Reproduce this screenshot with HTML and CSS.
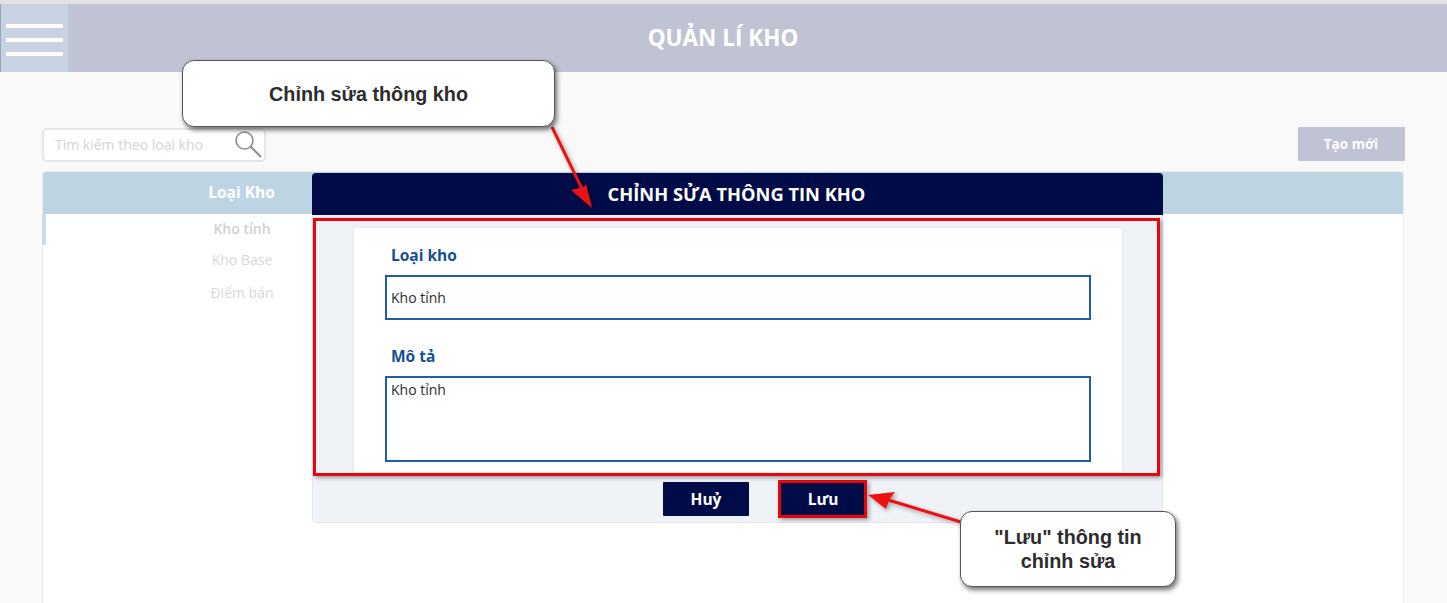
FILE: index.html
```html
<!DOCTYPE html>
<html lang="vi">
<head>
<meta charset="utf-8">
<title>Quản lí kho</title>
<link rel="stylesheet" href="styles.css">
</head>
<body>
<div class="page">
  <div class="strip"></div>
  <header class="topbar">
    <button class="menu" aria-label="Menu"><span></span><span></span><span></span></button>
    <h1 class="title">QUẢN LÍ KHO</h1>
  </header>
  <main class="content">
    <div class="toolbar">
      <div class="search">
        <span class="search-text">Tìm kiếm theo loại kho</span>
        <svg class="search-icon" width="30" height="30" viewBox="0 0 30 30" aria-hidden="true">
          <circle cx="11.5" cy="10.5" r="8.5" fill="none" stroke="#8f8f8f" stroke-width="1.6"/>
          <path d="M17.5 16.5L28 27" stroke="#8f8f8f" stroke-width="2.2" fill="none"/>
        </svg>
      </div>
      <button class="create">Tạo mới</button>
    </div>
    <section class="table">
      <div class="table-head"><div class="col">Loại Kho</div></div>
      <div class="row row-active"><div class="col">Kho tỉnh</div></div>
      <div class="row"><div class="col">Kho Base</div></div>
      <div class="row"><div class="col">Điểm bán</div></div>
    </section>
  </main>

  <div class="modal">
    <div class="modal-head">CHỈNH SỬA THÔNG TIN KHO</div>
    <div class="modal-body">
      <form class="panel">
        <label class="field-label">Loại kho</label>
        <div class="input">Kho tỉnh</div>
        <label class="field-label second">Mô tả</label>
        <div class="input textarea">Kho tỉnh</div>
      </form>
    </div>
    <div class="modal-foot">
      <button class="btn">Huỷ</button>
      <button class="btn">Lưu</button>
    </div>
  </div>

  <div class="mark mark-form"></div>
  <div class="mark mark-save"></div>

  <svg class="arrows" width="1447" height="603" viewBox="0 0 1447 603" aria-hidden="true">
    <g class="arrow-shadow">
      <path d="M552 127L584 193" stroke="#ee1111" stroke-width="3" fill="none"/>
      <path d="M592 208L571 190L584 187L586 184Z" fill="#ee1111"/>
      <path d="M961 522L885 499" stroke="#ee1111" stroke-width="3" fill="none"/>
      <path d="M868 495L895 492L889 500L886 509Z" fill="#ee1111"/>
    </g>
  </svg>

  <div class="callout callout-top">Chỉnh sửa thông kho</div>
  <div class="callout callout-save">"Lưu" thông tin<br>chỉnh sửa</div>
</div>
</body>
</html>
```
FILE: styles.css
```css
* { box-sizing: border-box; }
html, body { margin: 0; height: 100%; overflow: hidden; }
body { font-family: "Open Sans", "Noto Sans", sans-serif; background: #f9f9f9; }
.page { position: relative; width: 1447px; height: 603px; overflow: hidden; }
.strip { height: 4px; background: #e1e1e1; }

.topbar { display: flex; align-items: center; height: 68px; background: #bfc3d3; border-left: 1px solid #9aa6b8; }
.menu { display: flex; flex-direction: column; gap: 10px; flex: none; width: 67px; height: 68px; padding: 20px 5px 0 5px; background: #c8d3e1; border: 0; }
.menu span { display: block; flex: none; width: 57px; height: 4px; background: #fff; }
.title { flex: 1; margin: 0; padding-right: 69px; text-align: center; color: #fff; font-size: 22.5px; font-weight: 700; line-height: 70px; }

.content { padding: 55px 43px 0 42px; }
.toolbar { display: flex; justify-content: space-between; align-items: flex-start; height: 44px; }
.search { display: flex; align-items: center; justify-content: space-between; width: 224px; height: 34px; margin-top: 1px; padding: 0 0 0 11px; background: #fff; border: 2px solid #e6e6e6; border-radius: 5px; }
.search-text { color: #d4d4d4; font-size: 14px; line-height: 28px; white-space: nowrap; }
.search-icon { flex: none; margin-right: 1px; }
.create { width: 107px; height: 34px; margin-right: -1px; padding-right: 7px; background: #bfc3d3; border: 0; border-radius: 1px; color: #fff; font: 700 13.5px "Open Sans", sans-serif; }

.table { height: 440px; background: #fff; border: 1px solid #ececec; border-radius: 4px; }
.table-head { height: 42px; background: #bfd4e2; border-radius: 3px 3px 0 0; color: #fff; font-weight: 700; font-size: 15.5px; line-height: 40px; }
.col { width: 397px; text-align: center; }
.row { height: 33px; color: #d8d8d8; font-size: 14px; line-height: 29px; border-left: 4px solid transparent; margin-left: -1px; }
.row .col { width: 392px; }
.row-active { height: 31px; border-left-color: #c9dcea; color: #d0d0d0; font-weight: 600; }

.modal { position: absolute; left: 312px; top: 173px; width: 851px; height: 350px; display: flex; flex-direction: column; background: #eff2f7; border: 1px solid #e3e6ec; border-top: 0; border-radius: 5px; }
.modal-head { flex: none; height: 42px; margin: 0 0 0 -1px; width: 851px; padding-right: 2px; background: #000b47; border-radius: 4px 4px 0 0; color: #fff; font-size: 18.3px; font-weight: 700; line-height: 42px; text-align: center; }
.modal-body { padding: 13px 40px 0 41px; }
.panel { height: 244px; padding: 15px 31px 0; background: #fff; box-shadow: 0 0 2px #d8dbe2; }
.field-label { display: block; margin-left: 6px; color: #134f97; font-size: 15.5px; font-weight: 700; line-height: 24px; }
.field-label.second { margin-top: 24px; }
.input { width: 706px; height: 45px; margin-top: 8px; padding: 0 4px; border: 2px solid #1f5da8; color: #2c2c2c; font-size: 14px; line-height: 42px; background: #fff; }
.input.textarea { height: 86px; line-height: 22px; padding-top: 1px; }
.modal-foot { display: flex; justify-content: center; gap: 31px; padding: 10px 0 0 54px; }
.btn { width: 86px; height: 34px; background: #000b47; color: #fff; border: 0; border-radius: 1px; font: 700 15.5px "Open Sans", sans-serif; }

.mark { position: absolute; border: 3px solid #e8060c; box-shadow: 2px 2px 4px rgba(0,0,0,.35); }
.mark-form { left: 313px; top: 218px; width: 847px; height: 258px; }
.mark-save { left: 778px; top: 480px; width: 89px; height: 38px; }
.arrows { position: absolute; left: 0; top: 0; }
.arrow-shadow { filter: drop-shadow(2px 2px 2px rgba(0,0,0,.35)); }

.callout { position: absolute; display: flex; align-items: center; justify-content: center; text-align: center; background: #fff; border: 1px solid #555; border-radius: 12px; box-shadow: 2px 3px 5px rgba(0,0,0,.55); color: #2c2c2c; font-family: "Liberation Sans", Arial, sans-serif; font-weight: 700; font-size: 19.8px; line-height: 24px; }
.callout-top { left: 182px; top: 60px; width: 373px; height: 67px; }
.callout-save { left: 960px; top: 511px; width: 216px; height: 76px; }
```
